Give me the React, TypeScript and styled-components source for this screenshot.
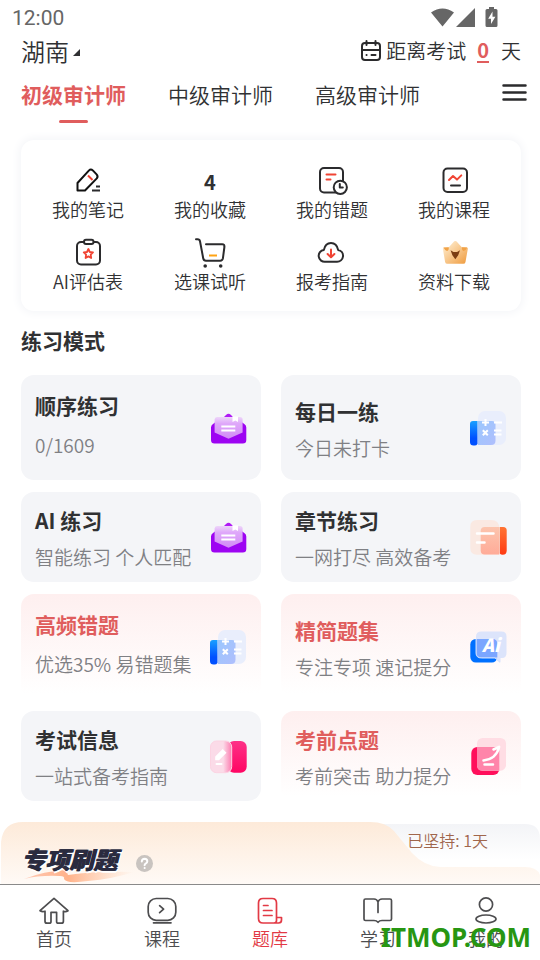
import React from "react";
import styled, { createGlobalStyle, css } from "styled-components";

const GlobalStyle = createGlobalStyle`
  * { box-sizing: border-box; }
  body { margin: 0; background: #fff; }
  button { border: 0; padding: 0; margin: 0; background: none; font: inherit; color: inherit; cursor: pointer; }
  h2, h3, p { margin: 0; }
  svg { display: block; flex: none; overflow: visible; }
`;

const Screen = styled.div`
  display: flex;
  flex-direction: column;
  height: 100vh;
  color: #303133;
  font-family: "Noto Sans CJK SC", "Noto Sans", sans-serif;
  font-weight: 350;
`;

const StatusBar = styled.div`
  display: flex;
  align-items: center;
  justify-content: space-between;
  height: 36px;
  padding: 0 41px 0 12px;
  color: #666;
  font: 400 21px/36px Roboto, sans-serif;
`;

const Header = styled.header`
  display: flex;
  align-items: center;
  justify-content: space-between;
  height: 30px;
  padding: 0 19px 0 21px;
`;

const Region = styled.button`
  display: flex;
  align-items: center;
  gap: 3px;
  font-size: 24px;
  line-height: 32px;
`;

const Countdown = styled.div`
  display: flex;
  align-items: center;
  font-size: 20px;
  line-height: 28px;
`;

const CountdownLabel = styled.span`
  margin: 0 11px 0 5px;
`;

const CountdownDays = styled.strong`
  margin-right: 12px;
  color: #e05d5d;
  font-size: 20px;
  line-height: 22px;
  border-bottom: 2px solid #e05d5d;
`;

const TabBar = styled.nav`
  display: flex;
  align-items: flex-start;
  gap: 42px;
  height: 62px;
  padding: 12px 13px 0 21px;
`;

const Tab = styled.button<{ $active?: boolean }>`
  display: flex;
  flex-direction: column;
  align-items: center;
  gap: 10px;
  font-size: 21px;
  line-height: 32px;
  ${(p) =>
    p.$active &&
    css`
      color: #e05d5d;
      font-weight: 700;
      &::after {
        content: "";
        width: 29px;
        height: 3px;
        border-radius: 2px;
        background: #e05d5d;
      }
    `}
`;

const MenuButton = styled.button`
  margin: 6px 0 0 auto;
`;

const Main = styled.main`
  display: flex;
  flex: 1;
  flex-direction: column;
  min-height: 0;
  padding-top: 12px;
  overflow-y: auto;
  scrollbar-width: none;
`;

const Shortcuts = styled.section`
  display: grid;
  grid-template-columns: repeat(4, 1fr);
  row-gap: 15px;
  margin: 0 19px 0 21px;
  padding: 26px 6px 16px;
  border-radius: 13px;
  background: #fff;
  box-shadow: 0 0 10px 2px #f4f5f8;
`;

const Shortcut = styled.button`
  display: flex;
  flex-direction: column;
  align-items: center;
  font-size: 18px;
  line-height: 27px;
`;

const ShortcutIcon = styled.span`
  display: flex;
  align-items: center;
  justify-content: center;
  height: 30px;
`;

const Count = styled.strong`
  font-size: 20px;
`;

const SectionTitle = styled.h2`
  padding: 13px 21px 19px;
  font-size: 21px;
  line-height: 32px;
`;

const Modes = styled.section`
  display: grid;
  grid-template-columns: 1fr 1fr;
  grid-template-rows: 105px 90px 105px 90px;
  gap: 12px 20px;
  padding: 0 19px 0 21px;
`;

const ModeCard = styled.button<{ $hot?: boolean }>`
  display: flex;
  align-items: center;
  justify-content: space-between;
  padding: 0 14px;
  border-radius: 13px;
  text-align: left;
  background: ${(p) => (p.$hot ? "linear-gradient(#feefef, #fff 95%)" : "#f4f5f8")};
`;

const ModeText = styled.div<{ $roomy?: boolean }>`
  display: flex;
  flex-direction: column;
  gap: ${(p) => (p.$roomy ? 12 : 9)}px;
  padding: ${(p) => (p.$roomy ? "0 0 6px" : "3px 0 0")};
`;

const ModeTitle = styled.h3<{ $hot?: boolean }>`
  color: ${(p) => (p.$hot ? "#e05d5d" : "#303133")};
  font-size: 21px;
  line-height: 28px;
  white-space: nowrap;
`;

const ModeNote = styled.p`
  color: #7f8084;
  font-size: 19px;
  line-height: 28px;
  white-space: nowrap;
`;

const Banner = styled.section`
  position: relative;
  display: flex;
  flex: 1;
  align-items: flex-start;
  justify-content: space-between;
  min-height: 62px;
  margin-top: 21px;
  overflow: hidden;
`;

const BannerBackdrop = styled.svg`
  position: absolute;
  inset: 0;
  width: 100%;
  height: 62px;
`;

const BannerHeading = styled.div`
  position: relative;
  display: flex;
  align-items: center;
  gap: 19px;
  padding: 20px 0 0 21px;
`;

const BannerTitle = styled.h2`
  color: #2a2b3f;
  font-size: 24px;
  font-style: italic;
  font-weight: 900;
  line-height: 34px;
  text-shadow: 1px 0 #2a2b3f, 2px 1px #fff, -1px 0 #fff, 1px 2px #fff;
`;

const Streak = styled.p`
  position: relative;
  padding: 6px 52px 0 0;
  color: #a0664c;
  font-size: 16px;
  line-height: 24px;
`;

const BottomNav = styled.nav`
  position: relative;
  display: grid;
  grid-template-columns: repeat(5, 1fr);
  flex: none;
  height: 76px;
  border-top: 1px solid #8a8a8a;
  background: #fff;
`;

const NavItem = styled.button<{ $active?: boolean }>`
  display: flex;
  flex-direction: column;
  align-items: center;
  padding-top: 11px;
  color: ${(p) => (p.$active ? "#e23a45" : "#4d4d4f")};
  font-size: 18px;
  line-height: 24px;
`;

const Watermark = styled.span`
  position: absolute;
  right: 9px;
  bottom: 5px;
  color: #279612;
  font-family: "Noto Sans", sans-serif;
  font-size: 26px;
  font-weight: 700;
  line-height: 36px;
  pointer-events: none;
`;

const dark = { fill: "none", stroke: "#2b2b2d", strokeWidth: 2, strokeLinecap: "round", strokeLinejoin: "round" } as const;
const red = { fill: "none", stroke: "#f04434", strokeWidth: 2, strokeLinecap: "round", strokeLinejoin: "round" } as const;
const white = { fill: "none", stroke: "#fff", strokeWidth: 2, strokeLinecap: "round", strokeLinejoin: "round" } as const;

const Glyph = ({ children, size = 30 }: { children: React.ReactNode; size?: number }) => (
  <svg width={size} height={size} viewBox={`0 0 ${size} ${size}`} aria-hidden="true">
    {children}
  </svg>
);

const NotesIcon = () => (
  <Glyph>
    <path {...dark} stroke="#111" d="M4.500 24.500V17L15.800 4.600q2-2 4-.2l3.800 4q1.800 2 .2 4L12 24.500z" />
    <path {...red} strokeLinecap="butt" d="M15 9.500l4.500 4.500" />
    <path {...dark} strokeLinecap="butt" d="M19 24.500h8M23 20.500h4" />
  </Glyph>
);
const WrongIcon = () => (
  <Glyph>
    <rect {...dark} x="3" y="2" width="23" height="24.500" rx="4" />
    <path {...red} d="M9.500 8.500h9M9.500 13.500h4" />
    <circle {...dark} fill="#fff" cx="23.300" cy="21.300" r="6.600" />
    <path {...dark} d="M22.800 18v3.600h3" />
  </Glyph>
);
const CourseIcon = () => (
  <Glyph>
    <rect {...dark} x="4.500" y="2.500" width="23.500" height="23.500" rx="4" />
    <path {...red} d="M10 14l4-4 4 3.600 4.300-4.200" />
    <path {...dark} d="M12 19.500h9" />
  </Glyph>
);
const ReportIcon = () => (
  <Glyph>
    <rect {...dark} x="4" y="4" width="23" height="22.500" rx="4" />
    <rect {...dark} fill="#fff" x="11" y="1.800" width="9.500" height="4.200" rx="2" />
    <path {...red} strokeWidth={1.800} d="M15.400 11l1.400 3 3.200.4-2.300 2.300.5 3.300-2.800-1.600-2.800 1.600.5-3.300-2.300-2.300 3.200-.4z" />
  </Glyph>
);
const CartIcon = () => (
  <Glyph>
    <path {...dark} d="M1 1.200h1.600q2 0 2.400 2l3.200 17q.5 2.500 2.800 2.500h14.200q2.300 0 2.700-2.300l1.500-11.400q.3-2.800-2.200-2.800H11" />
    <path {...red} stroke="#ffa313" strokeLinecap="butt" d="M14 17.500h8" />
    <circle cx="10.200" cy="28" r="1.800" fill="#2b2b2d" />
    <circle cx="25.700" cy="28" r="1.800" fill="#2b2b2d" />
  </Glyph>
);
const CloudIcon = () => (
  <Glyph>
    <path {...dark} d="M8.500 23.800H19.800a6 6 0 0 0 1.300-11.900C20.300 7.800 17.800 5 14 5S7.700 7.800 6.900 11.900A6 6 0 0 0 8.500 23.800z" />
    <path {...red} d="M14 11.500v7.800M10.600 16l3.400 3.400 3.400-3.400" />
  </Glyph>
);
const CrownIcon = () => (
  <Glyph>
    <defs>
      <linearGradient id="crown" x1="0" y1="0" x2="1" y2="1">
        <stop offset="0.200" stopColor="#fde3bd" />
        <stop offset="1" stopColor="#ef9a3c" />
      </linearGradient>
    </defs>
    <path d="M16.300 3q1 0 2 1.200l4.500 5.100 5 .2q1.200.2 1 1.400l-2.300 13q-.4 1.900-2.200 1.900H8.300q-1.800 0-2.200-1.900L3.900 10.900q-.2-1.200 1-1.400l4.900-.2 4.500-5.100q1-1.200 2-1.200z" fill="url(#crown)" />
    <path d="M4.500 9.500l5.300-.2q.2 3.300-1.600 3.700-2 .2-3.700-3.500zM28.200 9.500l-5.300-.2q-.2 3.300 1.600 3.700 2 .2 3.700-3.500z" fill="#f1a247" />
    <path d="M11.600 12.300l2.900 1.700h3.600l2.900-1.700-1.800 5-2.900 4-2.900-4z" fill="#7b3d12" />
  </Glyph>
);

const EnvelopeIcon = () => (
  <Glyph size={36}>
    <defs>
      <linearGradient id="sheet" x1="0" y1="0" x2="0" y2="1">
        <stop offset="0" stopColor="#edd6f9" />
        <stop offset="0.300" stopColor="#dfa8fa" />
        <stop offset="1" stopColor="#d18af5" />
      </linearGradient>
    </defs>
    <path d="M11 9l4-4q2.500-2.500 5 0l4 4z" fill="#b01af5" />
    <path d="M0 17.500Q0 15 2 14l2-1.500h27.300l2 1.500q2 1 2 3.500V30q0 3.500-3.500 3.500H3.500Q0 33.500 0 30z" fill="#9d04f2" />
    <path d="M3.600 9.500Q3.600 7 6 7h23q2.600 0 2.600 2.500v13L17.500 28.700 3.600 22.500z" fill="url(#sheet)" />
    <path d="M21.500 6.500H27V12l-2.700-1.600-2.800 1.600z" fill="#fff" />
    <path {...white} strokeLinecap="butt" d="M10.300 16.500h14M10.300 20.500h14" />
  </Glyph>
);
const CalcIcon = () => (
  <Glyph size={36}>
    <defs>
      <linearGradient id="spine" x1="0" y1="0" x2="0" y2="1">
        <stop offset="0" stopColor="#18a0ff" />
        <stop offset="0.700" stopColor="#0050ff" />
      </linearGradient>
      <linearGradient id="page" x1="0" y1="0" x2="1" y2="1">
        <stop offset="0" stopColor="#93c3fd" />
        <stop offset="1" stopColor="#a9b9fd" />
      </linearGradient>
    </defs>
    <rect x="7" y="1" width="28" height="34" rx="7" fill="#e9eefc" />
    <path d="M2 11h4.500v23q-1 1.500-3 1.500h-1Q-1 35.500-1 32V14q0-3 3-3z" fill="url(#spine)" />
    <path d="M7 11H21q3.500 0 3.500 3.500v16q0 4.500-4.500 4.500H7z" fill="url(#page)" opacity=".9" />
    <path {...white} strokeLinecap="butt" d="M11 12.500h7M14.500 9v7M23 12.500h8M11.800 20.200l5 5M16.800 20.200l-5 5M23 20.500h7.500M23 24.500h7.500" />
  </Glyph>
);
const ChapterIcon = () => (
  <Glyph size={36}>
    <defs>
      <linearGradient id="orange" x1="0" y1="0" x2="0" y2="1">
        <stop offset="0" stopColor="#ff7434" />
        <stop offset="1" stopColor="#ff3a12" />
      </linearGradient>
      <linearGradient id="salmon" x1="0" y1="0" x2="0" y2="1">
        <stop offset="0" stopColor="#fcc5ae" />
        <stop offset="1" stopColor="#ffab98" />
      </linearGradient>
    </defs>
    <path d="M6 1h14q8.300 0 8.300 8.300v26.400H6q-6.700 0-6.700-6.700V7.700Q-.7 1 6 1z" fill="#fae9e2" />
    <path d="M13.700 8h14.600v27.500H13.700q-4 0-4-4V12q0-4 4-4z" fill="url(#salmon)" />
    <path d="M28.800 8h3.400q3.500 0 3.500 3.500v20q0 4.200-4 4.200-2 0-2.900-1.200z" fill="url(#orange)" />
    <path {...white} strokeWidth={2.500} d="M6 14.500h16.500M6 23.500h7.500" />
  </Glyph>
);
const AiIcon = () => (
  <Glyph size={36}>
    <rect x="-.7" y="10" width="27" height="23.500" rx="5.500" fill="#0070ff" />
    <path d="M10.500 2.500h20q5 0 5 5V24q0 5-4.500 5h-1.500v4.500L24.500 29h-14Q5 29 5 24V7.500q0-5 5.500-5z" fill="#dce4fb" />
    <path d="M5.500 10h16q4.800 0 4.800 5v13.500H10.500q-5 0-5-5z" fill="#7ba6ff" />
    <path d="M5 10v14q0 5 5.500 5H24l5 4.300" fill="none" stroke="#c9dcff" />
    <text x="11" y="22.500" fill="#fff" fontFamily="Noto Sans CJK SC, sans-serif" fontSize="18" fontStyle="italic" fontWeight="900">Ai</text>
  </Glyph>
);
const InfoIcon = () => (
  <Glyph size={36}>
    <defs>
      <linearGradient id="pink" x1="0" y1="0" x2="0" y2="1">
        <stop offset="0" stopColor="#fd3187" />
        <stop offset="1" stopColor="#ff0563" />
      </linearGradient>
      <linearGradient id="blush" x1="0" y1="0" x2="1" y2="0">
        <stop offset="0.600" stopColor="#fbdbe8" />
        <stop offset="1" stopColor="#fc7cb0" />
      </linearGradient>
    </defs>
    <rect x="17" y="3" width="18.700" height="31.700" rx="6" fill="url(#pink)" />
    <rect x="-.5" y="3" width="21.200" height="31.700" rx="6" fill="url(#blush)" stroke="#fcd3e2" />
    <path d="M4.200 22.300v-3.800l7.500-7.500 3.800 3.800-7.500 7.500z" fill="#fff" />
    <path {...white} d="M5.500 26h5" />
  </Glyph>
);
const TrendIcon = () => (
  <Glyph size={36}>
    <rect x=".3" y="9" width="28" height="28" rx="6" fill="#ff0f5b" />
    <rect x="6" y="0" width="29" height="32.700" rx="5.500" fill="#ffdde4" />
    <path d="M6 9h18q4.300 0 4.300 4.300v19.400H11.500q-5.500 0-5.500-5.500z" fill="#ff85aa" />
    <path {...white} strokeWidth={2.500} d="M12.500 22.500Q25 21 28 9.500M22.500 11.500l5.600-2.700M13.500 26.500h8.500" />
  </Glyph>
);

const line = { fill: "none", stroke: "currentColor", strokeWidth: 1.7, strokeLinecap: "round", strokeLinejoin: "round" } as const;
const HomeIcon = () => (
  <Glyph>
    <path {...line} d="M15 2.300L1 14.700q2.500 1.500 5 .5v10q0 2 2 2h2.200q1.800 0 1.800-1.800v-9.100h5.600v9.100q0 1.800 1.800 1.800h3q2 0 2-2v-10q2.500 1 4.600-.5z" />
  </Glyph>
);
const PlayIcon = () => (
  <Glyph>
    <rect {...line} x="1.200" y="2.500" width="27.600" height="21.800" rx="8" />
    <path {...line} d="M12.600 9.700l4 3.500-4 3.500M6.500 26.800h17.500" />
  </Glyph>
);
const BankIcon = () => (
  <Glyph>
    <path {...line} d="M21.500 21.500V7q0-4.500-4.500-4.500H8Q3.500 2.500 3.500 7v15.500q0 4.500 4.500 4.500h15.500q3 0 3-3v-2.500h-5v3q0 2.500-2.500 2.500M8.500 9.500h4.500M8.500 14.500h8.500M8.500 19.500h8.500" />
  </Glyph>
);
const BookIcon = () => (
  <Glyph>
    <path {...line} d="M15 16.500V6q-1-3-4-3H2.500Q1 3 1 4.500V23q0 1.500 1.500 1.500h8.500q2.500 0 4 1.800 1.500-1.800 4-1.800h8q1.500 0 1.500-1.500V4.500Q28.500 3 27 3h-8q-3 0-4 3" />
  </Glyph>
);
const UserIcon = () => (
  <Glyph>
    <circle {...line} cx="15" cy="8.500" r="6.600" />
    <ellipse {...line} cx="15" cy="23" rx="10" ry="4" />
  </Glyph>
);

const shortcuts = [
  { label: "我的笔记", icon: <NotesIcon /> },
  { label: "我的收藏", icon: <Count>4</Count> },
  { label: "我的错题", icon: <WrongIcon /> },
  { label: "我的课程", icon: <CourseIcon /> },
  { label: "AI评估表", icon: <ReportIcon /> },
  { label: "选课试听", icon: <CartIcon /> },
  { label: "报考指南", icon: <CloudIcon /> },
  { label: "资料下载", icon: <CrownIcon /> },
];

const modes = [
  { title: "顺序练习", note: "0/1609", icon: <EnvelopeIcon />, roomy: true },
  { title: "每日一练", note: "今日未打卡", icon: <CalcIcon /> },
  { title: "AI 练习", note: "智能练习 个人匹配", icon: <EnvelopeIcon /> },
  { title: "章节练习", note: "一网打尽 高效备考", icon: <ChapterIcon /> },
  { title: "高频错题", note: "优选35% 易错题集", icon: <CalcIcon />, roomy: true, hot: true },
  { title: "精简题集", note: "专注专项 速记提分", icon: <AiIcon />, hot: true },
  { title: "考试信息", note: "一站式备考指南", icon: <InfoIcon /> },
  { title: "考前点题", note: "考前突击 助力提分", icon: <TrendIcon />, hot: true },
];

const navItems = [
  { label: "首页", icon: <HomeIcon /> },
  { label: "课程", icon: <PlayIcon /> },
  { label: "题库", icon: <BankIcon />, active: true },
  { label: "学习", icon: <BookIcon /> },
  { label: "我的", icon: <UserIcon /> },
];

export default function App() {
  return (
    <Screen>
      <GlobalStyle />
      <StatusBar>
        <span>12:00</span>
        <svg width="68" height="20" viewBox="0 0 68 20" fill="#666" aria-hidden="true">
          <path d="M0 4.500Q11.500-3.500 23 4.500L11.500 18.500zM44 0v19H25zM58 1V-1h5v2h2q1.500 0 1.500 1.500v15q0 1.500-1.500 1.500h-9q-1.500 0-1.500-1.500v-15Q54.500 1 56 1z" />
          <path d="M61.500 3.500l-4.300 7.300h2.800v5.200l4.400-7.300h-2.900z" fill="#fff" />
        </svg>
      </StatusBar>
      <Header>
        <Region>
          湖南
          <svg width="8" height="8" viewBox="0 0 8 8" aria-hidden="true">
            <path d="M8 2v7H1z" fill="#303133" />
          </svg>
        </Region>
        <Countdown>
          <svg width="20" height="22" viewBox="0 0 20 22" aria-hidden="true">
            <rect {...dark} x="1" y="3" width="18" height="17" rx="3" />
            <path {...dark} d="M1 10h18M5.500 1v4M14.500 1v4M10.500 15h4M5.500 15h.1" />
          </svg>
          <CountdownLabel>距离考试</CountdownLabel>
          <CountdownDays>0</CountdownDays>天
        </Countdown>
      </Header>
      <TabBar>
        <Tab $active>初级审计师</Tab>
        <Tab>中级审计师</Tab>
        <Tab>高级审计师</Tab>
        <MenuButton aria-label="菜单">
          <svg width="25" height="20" viewBox="0 0 25 20" aria-hidden="true">
            <path {...dark} strokeWidth={2.500} d="M1.500 1.500h22M1.500 8.500h22M1.500 15.500h22" />
          </svg>
        </MenuButton>
      </TabBar>
      <Main>
        <Shortcuts>
          {shortcuts.map((s) => (
            <Shortcut key={s.label}>
              <ShortcutIcon>{s.icon}</ShortcutIcon>
              {s.label}
            </Shortcut>
          ))}
        </Shortcuts>
        <SectionTitle>练习模式</SectionTitle>
        <Modes>
          {modes.map((m) => (
            <ModeCard key={m.title} $hot={m.hot}>
              <ModeText $roomy={m.roomy}>
                <ModeTitle $hot={m.hot}>{m.title}</ModeTitle>
                <ModeNote>{m.note}</ModeNote>
              </ModeText>
              {m.icon}
            </ModeCard>
          ))}
        </Modes>
        <Banner>
          <BannerBackdrop viewBox="0 0 540 62" preserveAspectRatio="none" aria-hidden="true">
            <defs>
              <linearGradient id="peach" x1="0" y1="0" x2="0" y2="1">
                <stop offset="0" stopColor="#fdead9" />
                <stop offset="1" stopColor="#fffaf6" />
              </linearGradient>
              <linearGradient id="mist" x1="0" y1="0" x2="0" y2="1">
                <stop offset="0" stopColor="#f3f4f7" />
                <stop offset="0.600" stopColor="#fff" />
              </linearGradient>
              <linearGradient id="brush" x1="0" y1="0" x2="1" y2="0">
                <stop offset="0" stopColor="#ffc9b5" />
                <stop offset="0.400" stopColor="#ffb28a" />
                <stop offset="1" stopColor="#ffc9a5" stopOpacity="0" />
              </linearGradient>
            </defs>
            <path d="M340 2H525q15 0 15 15V62H340z" fill="url(#mist)" />
            <path d="M1 62V20Q3 0 23 0H370Q386 0 394 9L412 31Q424 44 440 45H525q12 0 15 8v9z" fill="url(#peach)" />
            <path d="M24 57Q44 49 66 48L68 53Q96 49 134 50 112 57 88 59 66 62 64 57 65 54 60 54 40 53 24 57z" fill="url(#brush)" />
          </BannerBackdrop>
          <BannerHeading>
            <BannerTitle>专项刷题</BannerTitle>
            <svg width="17" height="17" viewBox="0 0 17 17" aria-hidden="true">
              <circle cx="8.500" cy="12.500" r="8.500" fill="#c9c4c0" />
              <path {...white} d="M5.800 10.500q.2-2.700 2.800-2.700 2.700.1 2.700 2.400 0 1.300-1.400 2.100-1.300.7-1.300 1.900M8.600 17h.1" />
            </svg>
          </BannerHeading>
          <Streak>已坚持: 1天</Streak>
        </Banner>
      </Main>
      <BottomNav>
        {navItems.map((n) => (
          <NavItem key={n.label} $active={n.active}>
            {n.icon}
            {n.label}
          </NavItem>
        ))}
        <Watermark>ITMOP.COM</Watermark>
      </BottomNav>
    </Screen>
  );
}
